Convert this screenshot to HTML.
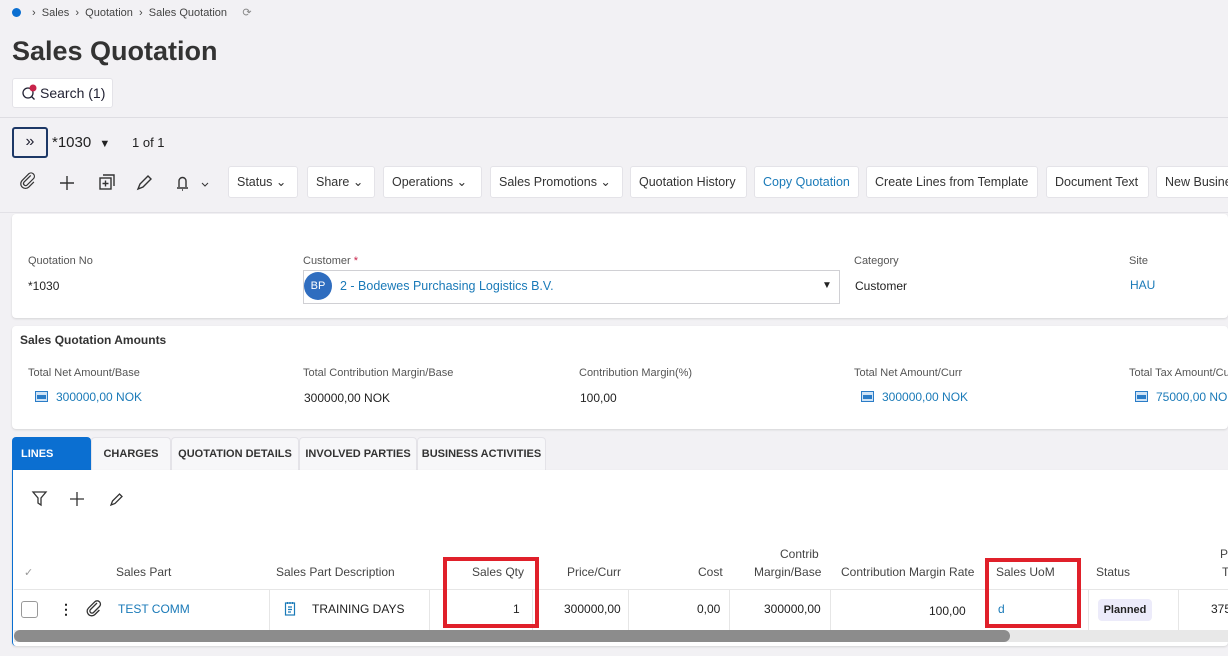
<!DOCTYPE html>
<html><head><meta charset="utf-8"><style>
*{margin:0;padding:0;box-sizing:border-box}
body{width:1228px;height:656px;overflow:hidden;background:#f2f1f4;font-family:"Liberation Sans",sans-serif;color:#222;position:relative;font-size:12px}
.a{position:absolute;white-space:nowrap}
.btn{position:absolute;top:166px;height:32px;background:#fff;border:1px solid #e4e3e8;border-radius:3px;font-size:12.5px;line-height:30px;padding:0 8px;color:#333;white-space:nowrap;overflow:hidden}
.lbl{font-size:11px;color:#555}
.val{font-size:12px;color:#222}
.link{color:#1a7ab8}
.card{position:absolute;left:12px;right:0;background:#fff;border-radius:4px;box-shadow:0 1px 2px rgba(0,0,0,.12)}
.tab{position:absolute;top:437px;height:34px;background:#f7f7f9;border:1px solid #e4e3e8;border-bottom:none;border-radius:4px 4px 0 0;font-size:11px;font-weight:bold;line-height:33px;text-align:center;color:#333}
.th{position:absolute;font-size:12px;color:#444}
.td{position:absolute;top:602px;font-size:12px;color:#222}
.vl{position:absolute;top:590px;height:40px;width:1px;background:#e6e6e6}
.mi{display:inline-block;width:13px;height:11px;border:1px solid #2a7cc7;background:#cfe3f6;position:relative;vertical-align:-1px;margin-right:8px}
.mi:after{content:"";position:absolute;left:1px;right:1px;top:3px;height:4px;background:#2a7cc7}
</style></head><body>
<div class="a" style="left:12px;top:8px;width:9px;height:9px;border-radius:50%;background:#0b6fd1"></div>
<div class="a" style="left:32px;top:6px;font-size:11px;color:#444">›&nbsp; Sales &nbsp;›&nbsp; Quotation &nbsp;›&nbsp; Sales Quotation &nbsp;&nbsp;&nbsp; <span style="color:#888">⟳</span></div>
<div class="a" style="left:12px;top:36px;font-size:27px;font-weight:bold;color:#333">Sales Quotation</div>
<div class="a" style="left:12px;top:78px;width:101px;height:30px;background:#fff;border:1px solid #e4e3e8;border-radius:3px;font-size:14px;line-height:28px;padding-left:27px;color:#223">Search (1)</div>
<svg class="a" style="left:21px;top:84px" width="18" height="18"><circle cx="7" cy="9" r="5" fill="none" stroke="#223" stroke-width="1.3"/><path d="M10.5 12.5l3 3" stroke="#223" stroke-width="1.3"/><circle cx="12" cy="4" r="3.5" fill="#c8234a"/></svg>
<div class="a" style="left:0;top:117px;width:1228px;height:1px;background:#dedde2"></div>
<div class="a" style="left:12px;top:127px;width:36px;height:31px;border:2px solid #1d3866;border-radius:3px;text-align:center;line-height:26px;font-size:16px;color:#223">»</div>
<div class="a" style="left:52px;top:134px;font-size:15px;color:#222">*1030 <span style="font-size:11px;margin-left:4px">▼</span></div>
<div class="a" style="left:132px;top:135px;font-size:13px;color:#222">1 of 1</div>
<svg class="a" style="left:20px;top:172px" width="200" height="22" fill="none" stroke="#333" stroke-width="1.4">
<path d="M15 4l-8 8a2.5 2.5 0 003.5 3.5l8-8a4 4 0 00-5.6-5.6l-8 8a5.5 5.5 0 007.8 7.8l6-6" transform="translate(-2,0) scale(.85)"/>
<path d="M47 4v14M40 11h14"/>
<rect x="80" y="6" width="11" height="11"/><path d="M83 3h11v11M85.5 8.5v6M82.5 11.5h6"/>
<path d="M118 17l2-5 8-8 3 3-8 8z"/>
<path d="M157 16h11M159 15v-6a3.5 3.5 0 017 0v6M162 18h1"/><path d="M182 11l3 3 3-3" stroke-width="1"/>
</svg>
<div class="btn" style="left:228px;width:70px">Status ⌄</div>
<div class="btn" style="left:307px;width:68px">Share ⌄</div>
<div class="btn" style="left:383px;width:99px">Operations ⌄</div>
<div class="btn" style="left:490px;width:133px">Sales Promotions ⌄</div>
<div class="btn" style="left:630px;width:117px">Quotation History</div>
<div class="btn" style="left:754px;width:105px;color:#1a7ab8">Copy Quotation</div>
<div class="btn" style="left:866px;width:172px">Create Lines from Template</div>
<div class="btn" style="left:1046px;width:103px">Document Text</div>
<div class="btn" style="left:1156px;width:90px">New Business</div>
<div class="a" style="left:0;top:212px;width:1228px;height:1px;background:#e2e1e6"></div>
<div class="card" style="top:214px;height:104px"></div>
<div class="a lbl" style="left:28px;top:255px">Quotation No</div>
<div class="a val" style="left:28px;top:279px">*1030</div>
<div class="a lbl" style="left:303px;top:255px">Customer <span style="color:#c8234a">*</span></div>
<div class="a" style="left:303px;top:270px;width:537px;height:34px;border:1px solid #d0d0d4"></div>
<div class="a" style="left:304px;top:272px;width:28px;height:28px;border-radius:50%;background:#2f6dbf;color:#fff;font-size:11px;text-align:center;line-height:28px">BP</div>
<div class="a link" style="left:340px;top:279px;font-size:12.5px">2 - Bodewes Purchasing Logistics B.V.</div>
<div class="a" style="left:822px;top:280px;font-size:10px">▼</div>
<div class="a lbl" style="left:854px;top:255px">Category</div>
<div class="a val" style="left:855px;top:279px">Customer</div>
<div class="a lbl" style="left:1129px;top:255px">Site</div>
<div class="a link" style="left:1130px;top:278px">HAU</div>
<div class="card" style="top:326px;height:103px"></div>
<div class="a" style="left:20px;top:333px;font-size:12px;font-weight:bold;color:#333">Sales Quotation Amounts</div>
<div class="a lbl" style="left:28px;top:367px">Total Net Amount/Base</div>
<div class="a link" style="left:35px;top:390px"><span class="mi"></span>300000,00 NOK</div>
<div class="a lbl" style="left:303px;top:367px">Total Contribution Margin/Base</div>
<div class="a val" style="left:304px;top:391px">300000,00 NOK</div>
<div class="a lbl" style="left:579px;top:367px">Contribution Margin(%)</div>
<div class="a val" style="left:580px;top:391px">100,00</div>
<div class="a lbl" style="left:854px;top:367px">Total Net Amount/Curr</div>
<div class="a link" style="left:861px;top:390px"><span class="mi"></span>300000,00 NOK</div>
<div class="a lbl" style="left:1129px;top:367px">Total Tax Amount/Curr</div>
<div class="a link" style="left:1135px;top:390px"><span class="mi"></span>75000,00 NOK</div>
<div class="tab" style="left:12px;width:79px;background:#0b6fd1;color:#fff;border-color:#0b6fd1;text-align:left;padding-left:8px">LINES</div>
<div class="tab" style="left:91px;width:80px">CHARGES</div>
<div class="tab" style="left:171px;width:128px">QUOTATION DETAILS</div>
<div class="tab" style="left:299px;width:118px">INVOLVED PARTIES</div>
<div class="tab" style="left:417px;width:129px">BUSINESS ACTIVITIES</div>
<div class="card" style="top:470px;height:176px;border-radius:0 0 4px 4px;border-left:1px solid #0b6fd1"></div>
<svg class="a" style="left:30px;top:488px" width="100" height="22" fill="none" stroke="#333" stroke-width="1.3">
<path d="M3 4h13l-5 6v7l-3-2v-5z"/><path d="M47 4v14M40 11h14"/><path d="M81 17l1.5-4 7-7 2.5 2.5-7 7z"/></svg>
<div class="th" style="left:24px;top:566px;color:#999;font-size:11px">✓</div>
<div class="th" style="left:116px;top:565px">Sales Part</div>
<div class="th" style="left:276px;top:565px">Sales Part Description</div>
<div class="th" style="left:472px;top:565px">Sales Qty</div>
<div class="th" style="left:567px;top:565px">Price/Curr</div>
<div class="th" style="left:698px;top:565px">Cost</div>
<div class="th" style="left:780px;top:547px">Contrib</div>
<div class="th" style="left:754px;top:565px">Margin/Base</div>
<div class="th" style="left:841px;top:565px">Contribution Margin Rate</div>
<div class="th" style="left:996px;top:565px">Sales UoM</div>
<div class="th" style="left:1096px;top:565px">Status</div>
<div class="th" style="left:1220px;top:547px">P</div>
<div class="th" style="left:1222px;top:565px">T</div>
<div class="a" style="left:14px;top:589px;width:1214px;height:1px;background:#e6e6e6"></div>
<div class="vl" style="left:269px"></div><div class="vl" style="left:429px"></div><div class="vl" style="left:532px"></div><div class="vl" style="left:628px"></div><div class="vl" style="left:729px"></div><div class="vl" style="left:830px"></div><div class="vl" style="left:1088px"></div><div class="vl" style="left:1178px"></div>
<div class="a" style="left:21px;top:601px;width:17px;height:17px;border:1px solid #999;border-radius:3px;background:#fff"></div>
<div class="a" style="left:59px;top:601px;font-size:14px;font-weight:bold">⋮</div>
<svg class="a" style="left:86px;top:600px" width="16" height="18" fill="none" stroke="#333" stroke-width="1.3"><path d="M11 3l-6.5 6.5a2 2 0 003 3l6-6a3.3 3.3 0 00-4.7-4.7l-6.3 6.3a4.5 4.5 0 006.4 6.4l4.5-4.5"/></svg>
<div class="td" style="left:118px;color:#1a7ab8">TEST COMM</div>
<svg class="a" style="left:284px;top:601px" width="12" height="15" fill="none" stroke="#1a7ab8" stroke-width="1.2"><rect x="1.5" y="2" width="9" height="12"/><path d="M4 6h4M4 8.5h4M4 11h3M3.5 1v2M6 1v2M8.5 1v2"/></svg>
<div class="td" style="left:312px">TRAINING DAYS</div>
<div class="td" style="left:513px">1</div>
<div class="td" style="left:564px">300000,00</div>
<div class="td" style="left:697px">0,00</div>
<div class="td" style="left:764px">300000,00</div>
<div class="td" style="left:929px;top:604px">100,00</div>
<div class="td" style="left:998px;color:#1a7ab8">d</div>
<div class="a" style="left:1098px;top:599px;width:54px;height:22px;background:#ecebfa;border-radius:4px;font-size:11px;font-weight:bold;line-height:22px;text-align:center">Planned</div>
<div class="td" style="left:1211px">375</div>
<div class="a" style="left:14px;top:630px;width:1214px;height:12px;background:#e8e8e8"></div>
<div class="a" style="left:14px;top:630px;width:996px;height:12px;background:#8c8c8c;border-radius:6px"></div>
<div class="a" style="left:443px;top:557px;width:96px;height:71px;border:4px solid #e0202a"></div>
<div class="a" style="left:985px;top:558px;width:96px;height:70px;border:4px solid #e0202a"></div>
</body></html>
